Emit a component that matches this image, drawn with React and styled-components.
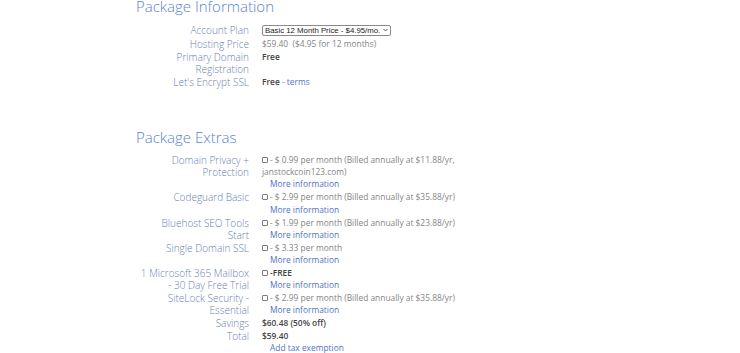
import React from "react";
import styled, { createGlobalStyle } from "styled-components";

const GlobalStyle = createGlobalStyle`
  body {
    margin: 0;
    background: #ffffff;
    font-family: "Open Sans", "Liberation Sans", sans-serif;
  }
`;

const Page = styled("div")`
  padding-left: 136px;
  margin-top: -4px;
`;

const Heading = styled("h2")`
  margin: ${(p) => (p.$gap ? "38px" : "0")} 0 ${(p) => (p.$gap ? "7px" : "8px")};
  font-size: 15px;
  font-weight: 300;
  line-height: 20px;
  color: #5b84cf;
`;

const Table = styled("div")`
  display: grid;
  grid-template-columns: 113px 196px;
  column-gap: 13px;
  line-height: 12.3px;
`;

const Label = styled("div")`
  text-align: right;
  color: #6b80b5;
  font-size: 10px;
  font-weight: 300;
  white-space: pre-line;
  padding: 0.3px 0;
`;

const Value = styled("div")`
  color: #858585;
  font-size: 8.4px;
  padding: 0.3px 0;
`;

const Strong = styled("b")`
  color: #444444;
  font-weight: 600;
`;

const Link = styled("a")`
  color: #4f73c4;
  text-decoration: none;
`;

const Indent = styled("div")`
  padding-left: 8px;
`;

const SelectBox = styled("div")`
  position: relative;
  display: inline-block;
  margin: 1px 0 1px;
`;

const Select = styled("select")`
  appearance: none;
  font-family: "Liberation Sans", Arial, sans-serif;
  font-size: 7.8px;
  height: 11px;
  line-height: 9px;
  padding: 0 0 0 2px;
  width: 129px;
  border: 1px solid #8a8a8a;
  border-radius: 2px;
  color: #222;
  background: #fff;
  display: block;
`;

const Chevron = styled("svg")`
  position: absolute;
  right: 3px;
  top: 3px;
  width: 5px;
  height: 4px;
  pointer-events: none;
`;

const Check = styled("input").attrs({ type: "checkbox" })`
  appearance: none;
  width: 6px;
  height: 6px;
  margin: 0 2px 0 0;
  border: 1px solid #7d7d7d;
  border-radius: 1px;
  vertical-align: 0;
  background: #fff;
`;

const extras = [
  {
    label: "Domain Privacy +\nProtection",
    text: "- $ 0.99 per month (Billed annually at $11.88/yr, janstockcoin123.com)",
  },
  {
    label: "Codeguard Basic",
    text: "- $ 2.99 per month (Billed annually at $35.88/yr)",
  },
  {
    label: "Bluehost SEO Tools\nStart",
    text: "- $ 1.99 per month (Billed annually at $23.88/yr)",
  },
  { label: "Single Domain SSL", text: "- $ 3.33 per month" },
  { label: "1 Microsoft 365 Mailbox\n- 30 Day Free Trial", free: true },
  {
    label: "SiteLock Security -\nEssential",
    text: "- $ 2.99 per month (Billed annually at $35.88/yr)",
  },
];

const App = () => {
  return (
    <Page>
      <GlobalStyle />
      <Heading>Package Information</Heading>
      <Table>
        <Label>Account Plan</Label>
        <Value>
          <SelectBox>
            <Select defaultValue="basic12">
              <option value="basic12">Basic 12 Month Price - $4.95/mo.</option>
            </Select>
            <Chevron viewBox="0 0 5 4">
              <path d="M0.5 1 L2.5 3 L4.5 1" fill="none" stroke="#333" strokeWidth="0.8" />
            </Chevron>
          </SelectBox>
        </Value>
        <Label>Hosting Price</Label>
        <Value>$59.40 &nbsp;($4.95 for 12 months)</Value>
        <Label>{"Primary Domain\nRegistration"}</Label>
        <Value>
          <Strong>Free</Strong>
        </Value>
        <Label>Let's Encrypt SSL</Label>
        <Value>
          <Strong>Free</Strong> - <Link href="#">terms</Link>
        </Value>
      </Table>

      <Heading $gap>Package Extras</Heading>
      <Table>
        {extras.map((item) => (
          <React.Fragment key={item.label}>
            <Label>{item.label}</Label>
            <Value>
              <Check />
              {item.free ? <Strong>-FREE</Strong> : item.text}
              <Indent>
                <Link href="#">More information</Link>
              </Indent>
            </Value>
          </React.Fragment>
        ))}
        <Label>Savings</Label>
        <Value>
          <Strong>$60.48 (50% off)</Strong>
        </Value>
        <Label>Total</Label>
        <Value>
          <Strong>$59.40</Strong>
          <Indent>
            <Link href="#">Add tax exemption</Link>
          </Indent>
        </Value>
      </Table>
    </Page>
  );
};

export default App;
